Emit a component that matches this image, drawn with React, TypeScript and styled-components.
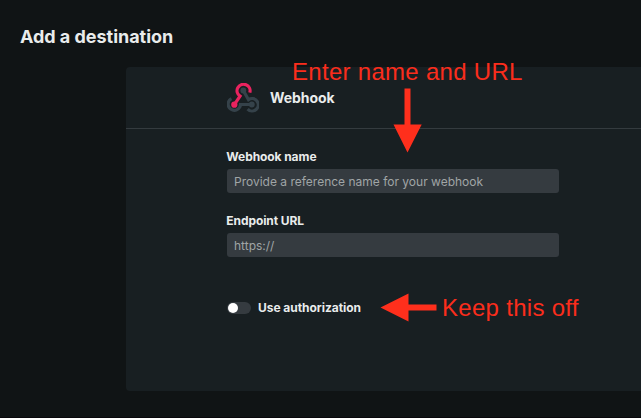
import React from "react";
import styled, { createGlobalStyle } from "styled-components";

const GlobalStyle = createGlobalStyle`
  *, *::before, *::after { box-sizing: border-box; }
  body {
    margin: 0;
    background: #101415;
    color: #e9ecec;
    font-family: Inter, sans-serif;
    overflow: hidden;
  }
`;

const Page = styled.main`
  position: relative;
  width: 641px;
  height: 418px;
  overflow: hidden;
  padding: 25px 0 0 20px;
  border-bottom: 1px solid #09080c;
`;

const Title = styled.h1`
  margin: 0 0 19px;
  font-size: 18px;
  line-height: 23px;
  font-weight: 700;
  letter-spacing: -0.03px;
`;

const Panel = styled.section`
  margin-left: 106px;
  height: 324px;
  background: #181f22;
  border-radius: 4px 0 0 4px;
`;

const PanelHeader = styled.header`
  display: flex;
  align-items: center;
  gap: 11px;
  height: 62px;
  padding-left: 101px;
  border-bottom: 1px solid #343b3f;
`;

const PanelTitle = styled.h2`
  margin: 0;
  font-size: 14px;
  line-height: 20px;
  font-weight: 700;
  letter-spacing: -0.06px;
`;

const Form = styled.form`
  display: flex;
  flex-direction: column;
  gap: 20px;
  width: 433px;
  padding: 20px 0 0 101px;
`;

const Field = styled.label`
  display: flex;
  flex-direction: column;
  gap: 4px;
`;

const Label = styled.span`
  font-size: 12px;
  line-height: 16px;
  font-weight: 700;
  letter-spacing: -0.04px;
`;

const FieldLabel = styled(Label)`
  margin-left: -0.7px;
  letter-spacing: -0.08px;
`;

const Input = styled.input`
  height: 24px;
  padding: 1px 7px 0;
  border: 0;
  border-radius: 3px;
  outline: 0;
  background: #353b40;
  color: #e9ecec;
  font: 400 12px/16px Inter, sans-serif;

  &::placeholder {
    color: #a0a5a6;
    opacity: 1;
  }
`;

const ToggleRow = styled.div`
  display: flex;
  align-items: center;
  gap: 7px;
  margin-top: 23px;
`;

const Switch = styled.button`
  display: flex;
  align-items: center;
  width: 24px;
  height: 12px;
  padding: 0 1px;
  border: 0;
  border-radius: 6px;
  background: #353b40;
`;

const Knob = styled.span`
  width: 10px;
  height: 10px;
  border-radius: 50%;
  background: #fff;
`;

const Note = styled.div<{ $x: number; $y: number; $size: number }>`
  position: absolute;
  left: ${(p) => p.$x}px;
  top: ${(p) => p.$y}px;
  color: #fb2d1c;
  font: 400 ${(p) => p.$size}px/28px "Liberation Sans", Arial, sans-serif;
  letter-spacing: 0.29px;
  white-space: nowrap;
`;

const Arrow = styled.svg<{ $x: number; $y: number }>`
  position: absolute;
  left: ${(p) => p.$x}px;
  top: ${(p) => p.$y}px;
  fill: #ff2f1c;
`;

const WebhookLogo = () => (
  <svg width="32" height="30" viewBox="0 0 32 30" fill="none" strokeWidth="3.2" aria-hidden="true">
    <g stroke="#35424a">
      <path d="M4.4 15.6A6.2 6.2 0 1 0 13.5 21.5H24.8" />
      <path d="M16.3 7.5L21.5 16.7A6.2 6.2 0 1 1 20.6 26.2" />
    </g>
    <circle cx="16.3" cy="7.5" r="2.9" fill="#35424a" />
    <circle cx="24.8" cy="21.5" r="2.9" fill="#35424a" />
    <path d="M22.8 9.6A6.5 6.5 0 1 0 13 13.2L7.3 21.7" stroke="#e9235f" />
    <circle cx="7.3" cy="21.7" r="3.1" fill="#e9235f" />
  </svg>
);

export default function App() {
  return (
    <>
      <GlobalStyle />
      <Page>
        <Title>Add a destination</Title>
        <Panel>
          <PanelHeader>
            <WebhookLogo />
            <PanelTitle>Webhook</PanelTitle>
          </PanelHeader>
          <Form>
            <Field>
              <FieldLabel>Webhook name</FieldLabel>
              <Input placeholder="Provide a reference name for your webhook" />
            </Field>
            <Field>
              <FieldLabel>Endpoint URL</FieldLabel>
              <Input placeholder="https://" />
            </Field>
            <ToggleRow>
              <Switch type="button" role="switch" aria-checked="false" aria-label="Use authorization">
                <Knob />
              </Switch>
              <Label>Use authorization</Label>
            </ToggleRow>
          </Form>
        </Panel>
        <Note $x={292} $y={58} $size={24}>Enter name and URL</Note>
        <Arrow $x={393} $y={88} width="30" height="65" viewBox="0 0 30 65">
          <path d="M11.5 .5h6v36h11.2L14.5 64.5.5 36.5h11z" />
        </Arrow>
        <Note $x={442} $y={294} $size={24}>Keep this off</Note>
        <Arrow $x={380} $y={293} width="57" height="30" viewBox="0 0 57 30">
          <path d="M56.5 11.5v6h-28v11L.5 14.5 28.5.5v11z" />
        </Arrow>
      </Page>
    </>
  );
}
